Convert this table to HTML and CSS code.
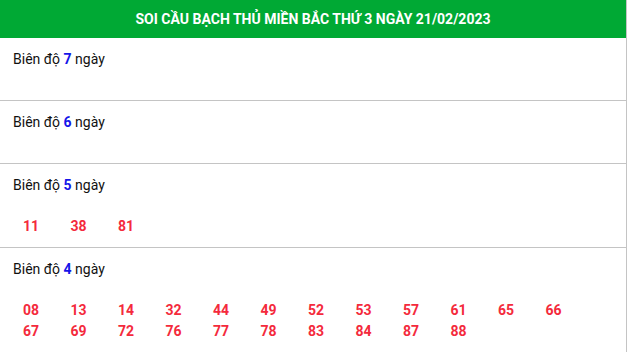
FILE: index.html
```html
<!DOCTYPE html>
<html lang="vi">
<head>
<meta charset="utf-8">
<title>Soi cầu bạch thủ</title>
<link rel="stylesheet" href="styles.css">
</head>
<body>
<div class="box">
  <div class="head">SOI CẦU BẠCH THỦ MIỀN BẮC THỨ 3 NGÀY 21/02/2023</div>
  <div class="row">
    <div class="title">Biên độ <b>7</b> ngày</div>
    <div class="nums"></div>
  </div>
  <div class="row">
    <div class="title">Biên độ <b>6</b> ngày</div>
    <div class="nums"></div>
  </div>
  <div class="row">
    <div class="title">Biên độ <b>5</b> ngày</div>
    <div class="nums"><span>11</span><span>38</span><span>81</span></div>
  </div>
  <div class="row">
    <div class="title">Biên độ <b>4</b> ngày</div>
    <div class="nums"><span>08</span><span>13</span><span>14</span><span>32</span><span>44</span><span>49</span><span>52</span><span>53</span><span>57</span><span>61</span><span>65</span><span>66</span><span>67</span><span>69</span><span>72</span><span>76</span><span>77</span><span>78</span><span>83</span><span>84</span><span>87</span><span>88</span></div>
  </div>
</div>
</body>
</html>
```
FILE: styles.css
```css
html, body {
  margin: 0;
  padding: 0;
  background: #fff;
}
body {
  font-family: Roboto, "Liberation Sans", Arial, sans-serif;
  font-size: 14px;
  color: #111;
}
.box {
  width: 626px;
  border-right: 1px solid #c4c4c4;
}
.head {
  height: 38px;
  background: #00a934;
  color: #fff;
  font-weight: 700;
  font-size: 14px;
  display: flex;
  align-items: center;
  justify-content: center;
}
.row {
  border-bottom: 1px solid #c4c4c4;
  padding: 11px 13px 10px;
}
.title {
  line-height: 20px;
}
.title b {
  color: #1515e8;
  font-weight: 700;
}
.nums {
  margin-top: 21px;
  padding-left: 10px;
  display: grid;
  grid-template-columns: repeat(12, 47.5px);
  min-height: 0;
}
.nums span {
  color: #f42a3c;
  font-weight: 700;
  line-height: 21px;
}
```
